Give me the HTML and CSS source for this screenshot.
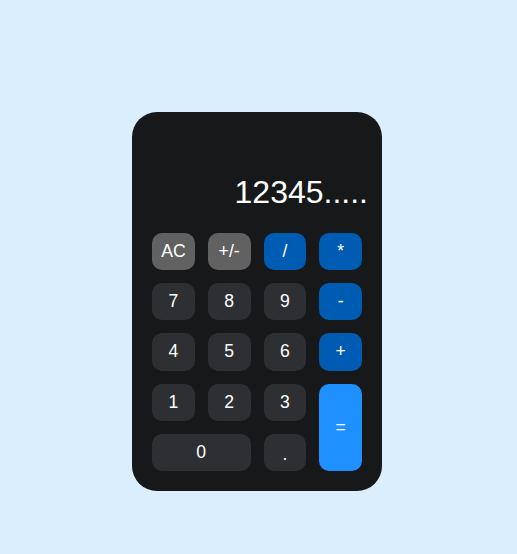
FILE: index.html
```html
<!DOCTYPE html>
<html>
<head>
<meta charset="utf-8">
<link rel="stylesheet" href="styles.css">
</head>
<body>
<div class="calculator">
  <div class="display">12345.....</div>
  <div class="keys">
    <button class="key gray">AC</button>
    <button class="key gray">+/-</button>
    <button class="key op">/</button>
    <button class="key op">*</button>
    <button class="key">7</button>
    <button class="key">8</button>
    <button class="key">9</button>
    <button class="key op">-</button>
    <button class="key">4</button>
    <button class="key">5</button>
    <button class="key">6</button>
    <button class="key op">+</button>
    <button class="key">1</button>
    <button class="key">2</button>
    <button class="key">3</button>
    <button class="key equals">=</button>
    <button class="key zero">0</button>
    <button class="key dot">.</button>
  </div>
</div>
</body>
</html>
```
FILE: styles.css
```css
html, body {
  margin: 0;
  padding: 0;
}
body {
  background: #dbeefe;
  min-height: 554px;
  font-family: "Liberation Sans", Arial, sans-serif;
  display: flex;
  justify-content: center;
  align-items: flex-start;
}
.calculator {
  margin-top: 112px;
  margin-left: -3px;
  width: 250px;
  box-sizing: border-box;
  padding: 20px;
  background: #17181a;
  border-radius: 25px;
}
.display {
  height: 79px;
  margin: 0 -6px 22px 0;
  display: flex;
  align-items: flex-end;
  justify-content: flex-end;
  color: #ffffff;
  font-size: 32px;
  line-height: 37px;
}
.keys {
  display: grid;
  grid-template-columns: repeat(4, 1fr);
  grid-auto-rows: 37.2px;
  gap: 13px;
}
.key {
  border: none;
  border-radius: 10px;
  background: #2e2f33;
  color: #ffffff;
  font-family: "Liberation Sans", Arial, sans-serif;
  font-size: 17.6px;
  padding: 0;
  margin: 0;
}
.gray {
  background: #616161;
}
.op {
  background: #005bb3;
}
.equals {
  background: #1e90ff;
  grid-row: span 2;
}
.zero {
  grid-column: span 2;
}
.dot {
  padding-top: 4px;
}
```
